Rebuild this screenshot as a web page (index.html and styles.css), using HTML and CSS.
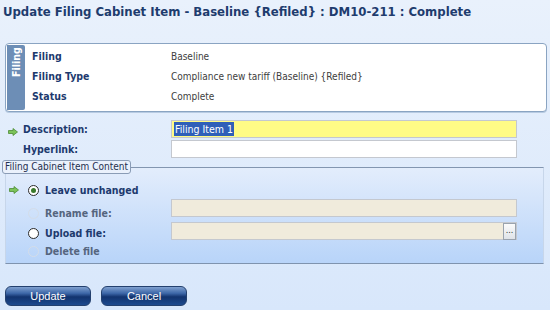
FILE: index.html
```html
<!DOCTYPE HTML>
<html>
<head>
<link rel="stylesheet" href="styles.css">
</head>
<body>

<h1 class="title">Update Filing Cabinet Item - Baseline {Refiled} : DM10-211 : Complete</h1>

<div class="summary">
  <div class="summary-tab"><span>Filing</span></div>
  <div class="summary-rows">
    <div class="summary-label">Filing</div>
    <div class="summary-value">Baseline</div>
    <div class="summary-label">Filing Type</div>
    <div class="summary-value">Compliance new tariff (Baseline) {Refiled}</div>
    <div class="summary-label">Status</div>
    <div class="summary-value">Complete</div>
  </div>
</div>

<div class="form-rows">
  <div class="form-label">
    <svg class="arrow" width="10" height="8" viewBox="0 0 10 8"><path d="M0.5 2.5H5V0.5L9.5 4L5 7.5V5.5H0.5Z" fill="#7cc35a" stroke="#4c8c34" stroke-width="0.8"/></svg>
    Description:
  </div>
  <div class="field field-current"><span class="selected">Filing Item 1</span></div>
  <div class="form-label">Hyperlink:</div>
  <div class="field"></div>
</div>

<fieldset class="content">
  <legend>Filing Cabinet Item Content</legend>
  <div class="content-rows">
    <div class="option">
      <svg class="arrow" width="10" height="8" viewBox="0 0 10 8"><path d="M0.5 2.5H5V0.5L9.5 4L5 7.5V5.5H0.5Z" fill="#7cc35a" stroke="#4c8c34" stroke-width="0.8"/></svg>
      <span class="radio radio-on"></span>Leave unchanged
    </div>
    <div></div>
    <div class="option option-off"><span class="radio"></span>Rename file:</div>
    <div class="field field-off"></div>
    <div class="option"><span class="radio"></span>Upload file:</div>
    <div class="field field-off"><span class="browse">...</span></div>
    <div class="option option-off"><span class="radio"></span>Delete file</div>
    <div></div>
  </div>
</fieldset>

<div class="actions">
  <button class="btn">Update</button>
  <button class="btn">Cancel</button>
</div>

</body>
</html>
```

FILE: styles.css
```css
body {
  margin: 0;
  height: 310px;
  overflow: hidden;
  background: linear-gradient(#e9f1fc, #d8e7fb);
  font-family: "DejaVu Sans Condensed", "DejaVu Sans", sans-serif;
  font-size: 10px;
  color: #1d3a6e;
}

.title {
  margin: 0;
  padding: 3px 0 0 3px;
  height: 21px;
  font-size: 13px;
  line-height: 18px;
  font-weight: bold;
  color: #1e3c6e;
}

.summary {
  display: flex;
  margin: 19px 3px 0 5px;
  height: 67px;
  border: 1px solid #8aa4c2;
  border-radius: 4px;
  background: #fff;
  box-shadow: 0 1px 0 #b8cbe2;
}

.summary-tab {
  width: 18px;
  margin: 1px 0 1px 1px;
  border-radius: 2px 0 0 2px;
  background: #6d8eb6;
  color: #fff;
  font-size: 10.5px;
  font-weight: bold;
  writing-mode: vertical-rl;
  transform: rotate(180deg);
  text-align: end;
  line-height: 18px;
}

.summary-tab span {
  padding-bottom: 2px;
}

.summary-rows {
  display: grid;
  grid-template-columns: 139px auto;
  grid-auto-rows: 20px;
  align-items: center;
  padding: 2px 0 0 7px;
}

.summary-label {
  font-size: 10.5px;
  font-weight: bold;
}

.summary-value {
  color: #404040;
}

.form-rows {
  display: grid;
  grid-template-columns: 171px 346px;
  grid-auto-rows: 18px;
  row-gap: 2px;
  align-items: center;
  margin-top: 8px;
}

.form-label {
  display: flex;
  align-items: center;
  padding-left: 23px;
  font-size: 10.5px;
  font-weight: bold;
  position: relative;
}

.arrow {
  position: absolute;
  left: 8px;
  top: 5px;
}

.field {
  height: 18px;
  box-sizing: border-box;
  border: 1px solid #c4c8cf;
  background: #fff;
  display: flex;
  align-items: center;
  padding-left: 2px;
  color: #000;
}

.field-current {
  background: #fffb86;
}

.selected {
  background: #2f5fb8;
  color: #fff;
  padding: 0 1px;
  line-height: 14px;
  font-size: 10.5px;
}

.field-off {
  background: #f0ebdc;
  justify-content: flex-end;
  padding: 0;
}

.browse {
  width: 11px;
  height: 15px;
  border: 1px solid #9aa3ae;
  background: linear-gradient(#fbfbfb, #dfe3e8);
  font-size: 9px;
  line-height: 13px;
  text-align: center;
  color: #333;
}

.content {
  margin: 2px 6px 0 5px;
  padding: 0 0 3px 0;
  border: 1px solid #c7d6ea;
  border-top-color: #8396b0;
  border-bottom-color: #7f93ae;
  background: linear-gradient(#e3edfc, #b8d4f9);
}

.content legend {
  margin-left: -4px;
  padding: 0 2px;
  height: 14px;
  box-sizing: border-box;
  border: 1px solid #8a9cb6;
  border-radius: 3px;
  background: #eaf1fc;
  font-weight: normal;
  line-height: 12px;
  color: #1f2f4f;
}

.content-rows {
  display: grid;
  grid-template-columns: 165px 346px;
  grid-template-rows: 21px 23px 20px 18px;
  align-items: end;
  padding-top: 4px;
}

.content-rows .field {
  align-self: start;
}

.option {
  display: flex;
  align-items: center;
  height: 18px;
  padding-left: 22px;
  font-size: 10.5px;
  font-weight: bold;
  position: relative;
}

.option .arrow {
  left: 3px;
}

.option-off {
  color: #55657e;
}

.radio {
  width: 11px;
  height: 11px;
  box-sizing: border-box;
  border: 1px solid #2b2b2b;
  border-radius: 50%;
  background: #fff;
  margin-right: 6px;
  display: inline-flex;
  align-items: center;
  justify-content: center;
}

.radio-on::after {
  content: "";
  width: 5px;
  height: 5px;
  border-radius: 50%;
  background: #3a7a2a;
}

.option-off .radio {
  border-color: #d4dde9;
  background: transparent;
}

.actions {
  display: flex;
  gap: 10px;
  margin: 22px 0 0 5px;
}

.btn {
  width: 86px;
  height: 20px;
  padding: 0;
  border: 1px solid #23406e;
  border-radius: 6px;
  background: linear-gradient(#7fa0cf 0%, #3d67a8 35%, #12336e 55%, #1d4a8e 100%);
  color: #fff;
  font-family: "Liberation Sans", sans-serif;
  font-size: 11px;
}
```
